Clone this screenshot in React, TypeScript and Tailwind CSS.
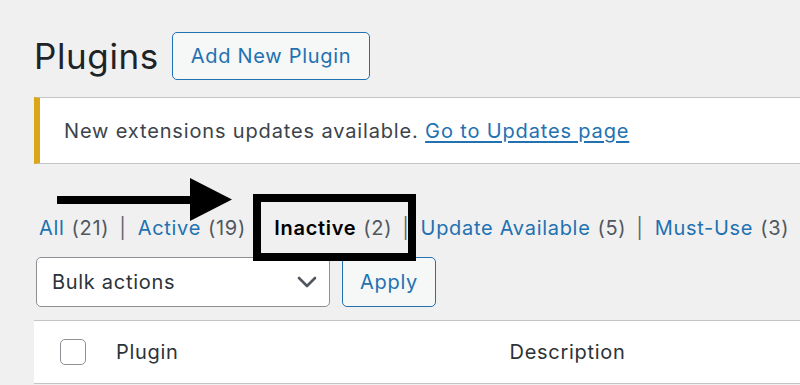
import React from 'react';

const views = [
  { label: 'All', count: 21 },
  { label: 'Active', count: 19 },
  { label: 'Inactive', count: 2, current: true },
  { label: 'Update Available', count: 5 },
  { label: 'Must-Use', count: 3 },
];

function Chevron() {
  return (
    <svg width="20" height="12" viewBox="0 0 20 12" fill="none">
      <path d="M2 2l8 8 8-8" stroke="#50575e" strokeWidth="2.6" strokeLinecap="round" strokeLinejoin="round" />
    </svg>
  );
}

export default function App() {
  return (
    <div className="relative h-[385px] w-[800px] overflow-hidden bg-[#f0f0f1] font-['Inter','Liberation_Sans',sans-serif] text-[#1d2327] tracking-[0.7px]">
      <div className="pl-[34px] pt-[32px]">
        {/* Title + add button */}
        <div className="flex items-center gap-[13px]">
          <h1 className="text-[35px] leading-[48px] font-normal tracking-[0.6px]">Plugins</h1>
          <button className="h-[48px] px-[18px] rounded-[5px] border-[1.5px] border-[#2271b1] bg-[#f6f7f7] text-[20px] text-[#2271b1]">
            Add New Plugin
          </button>
        </div>

        {/* Update notice */}
        <div className="mt-[17px] flex h-[67px] items-center border-y-[1.5px] border-l-[6px] border-[#c3c4c7] border-l-[#dba617] bg-white pl-[24px]">
          <p className="text-[20px] text-[#3c434a] tracking-[0.85px]">
            New extensions updates available.{' '}
            <a className="text-[#2271b1] underline underline-offset-[3px]" href="#">Go to Updates page</a>
          </p>
        </div>

        {/* Status filters */}
        <ul className="mt-[49px] flex h-[30px] items-center pl-[5px] text-[20px] whitespace-nowrap">
          {views.map((v, i) => (
            <li key={v.label} className="flex items-center">
              {i > 0 && <span className="ml-[10px] mr-[11px] text-[#646970]">|</span>}
              {v.current ? (
                <span className="font-semibold text-black">{v.label}</span>
              ) : (
                <a href="#" className="text-[#2271b1]">{v.label}</a>
              )}
              <span className="ml-[7px] text-[#50575e]">({v.count})</span>
            </li>
          ))}
        </ul>

        {/* Bulk actions */}
        <div className="mt-[14px] flex items-center gap-[12px] pl-[2px]">
          <div className="flex h-[50px] w-[294px] items-center justify-between rounded-[5px] border-[1.5px] border-[#8c8f94] bg-white pl-[15px] pr-[12px]">
            <span className="text-[20px] text-[#2c3338]">Bulk actions</span>
            <Chevron />
          </div>
          <button className="h-[50px] w-[94px] rounded-[5px] border-[1.5px] border-[#2271b1] bg-[#f6f7f7] text-[20px] text-[#2271b1]">
            Apply
          </button>
        </div>

        {/* Table header */}
        <div className="mt-[13px] flex h-[64px] items-center border-y-[1.5px] border-[#c3c4c7] bg-white">
          <div className="ml-[26px] h-[26px] w-[26px] rounded-[5px] border-[1.5px] border-[#8c8f94] bg-white" />
          <span className="ml-[30px] text-[20px] text-[#2c3338]">Plugin</span>
          <span className="ml-[331px] text-[20px] text-[#2c3338]">Description</span>
        </div>
      </div>

      {/* Annotation: arrow */}
      <svg className="absolute left-[57px] top-[178px]" width="176" height="43" viewBox="0 0 176 43">
        <rect x="0" y="18" width="136" height="8" fill="#000" />
        <polygon points="133,0 175,21.5 133,43" fill="#000" />
      </svg>

      {/* Annotation: highlight box */}
      <div className="absolute left-[253px] top-[194px] h-[67px] w-[163px] border-[8px] border-black" />
    </div>
  );
}
